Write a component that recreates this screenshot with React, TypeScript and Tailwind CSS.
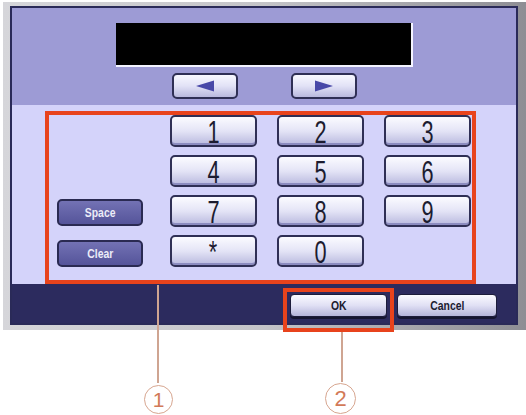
import React from 'react';

const keys = ['1', '2', '3', '4', '5', '6', '7', '8', '9', '*', '0'];

const font = { fontFamily: '"Liberation Sans", Arial, sans-serif' };

const Key: React.FC<{ label: string }> = ({ label }) => (
  <button className="flex items-center justify-center h-[32px] w-[87px] rounded-[5px] border-2 border-[#2f2f55] bg-gradient-to-b from-[#fbfbff] via-[#e4e4f6] to-[#b9b9de] shadow-[inset_0_-2px_0_#8c8cc0]">
    <span className="inline-block scale-x-70 text-[31px] leading-none text-[#1c1c30] pt-[3px]">{label}</span>
  </button>
);

const ArrowButton: React.FC<{ dir: 'left' | 'right' }> = ({ dir }) => (
  <button className="flex items-center justify-center h-[26px] w-[66px] rounded-[5px] border-2 border-[#2f2f55] bg-gradient-to-b from-[#f8f8ff] via-[#e2e2f6] to-[#b9b9de]">
    <svg width="20" height="12" viewBox="0 0 20 12">
      {dir === 'left' ? (
        <polygon points="1,6 19,0.5 19,11.5" fill="#4848a8" />
      ) : (
        <polygon points="19,6 1,0.5 1,11.5" fill="#4848a8" />
      )}
    </svg>
  </button>
);

const SideButton: React.FC<{ label: string }> = ({ label }) => (
  <button className="flex items-center justify-center h-[27px] w-[86px] rounded-[5px] border-2 border-[#2a2a52] bg-gradient-to-b from-[#7372b4] to-[#55549a]">
    <span className="inline-block scale-x-80 text-[13px] font-bold text-[#ececf8]">{label}</span>
  </button>
);

const BarButton: React.FC<{ label: string; width: string }> = ({ label, width }) => (
  <button
    className={`flex items-center justify-center h-[23px] ${width} rounded-[4px] border border-[#1c1c3a] bg-gradient-to-b from-[#fafaff] via-[#e0e0f4] to-[#b4b4da] shadow-[0_2px_0_#151530]`}
  >
    <span className="inline-block scale-x-80 text-[13px] font-bold text-[#1c1c30]">{label}</span>
  </button>
);

const App: React.FC = () => {
  return (
    <div className="relative w-[526px] h-[415px] bg-white overflow-hidden" style={font}>
      {/* device frame */}
      <div className="ml-[3px] mt-[2px] w-[523px] pt-[4px] pl-[7px] pr-[8px] pb-[5px] bg-gradient-to-r from-[#d6d6da] via-[#c4c4c8] to-[#8e8e94]">
        <div className="w-[508px] border-2 border-[#2a2a58] bg-[#2c2b5e]">
          {/* display area */}
          <div className="h-[97px] bg-[#9d9bd5] flex flex-col items-center pt-[15px]">
            <div className="w-[297px] h-[44px] bg-black border-r-2 border-b-2 border-[#f4f4ff]" />
            <div className="flex gap-[53px] mt-[6px]">
              <ArrowButton dir="left" />
              <ArrowButton dir="right" />
            </div>
          </div>

          {/* keypad area */}
          <div className="h-[179px] bg-[#d4d3fa] pt-[6px] pl-[33px]">
            <div className="w-[431px] h-[173px] border-4 border-[#e8431c] flex pl-[8px]">
              <div className="w-[86px] flex flex-col justify-end gap-[14px] pb-[1px] h-[153px]">
                <SideButton label="Space" />
                <SideButton label="Clear" />
              </div>
              <div className="ml-[27px] -mr-[4px] grid grid-cols-[87px_87px_87px] gap-x-[20px] gap-y-[8px] content-start">
                {keys.map((k) => (
                  <Key key={k} label={k} />
                ))}
              </div>
            </div>
          </div>

          {/* bottom bar */}
          <div className="h-[39px] flex justify-end items-start gap-[10px] pt-[10px] pr-[19px]">
            <BarButton label="OK" width="w-[97px]" />
            <BarButton label="Cancel" width="w-[100px]" />
          </div>
        </div>
      </div>

      {/* annotations */}
      <div className="absolute left-[283px] top-[288px] w-[111px] h-[44px] border-4 border-[#e8431c]" />
      <div className="absolute left-[157px] top-[285px] w-[2px] h-[98px] bg-[#cfa592]" />
      <div className="absolute left-[341px] top-[332px] w-[2px] h-[50px] bg-[#cfa592]" />
      <div className="absolute left-[144px] top-[385px] w-[29px] h-[29px] rounded-full border-[1.5px] border-[#d7a690] flex items-center justify-center">
        <span className="text-[21px] leading-none text-[#d27a58]">1</span>
      </div>
      <div className="absolute left-[325px] top-[383px] w-[31px] h-[31px] rounded-full border-[1.5px] border-[#d7a690] flex items-center justify-center">
        <span className="text-[22px] leading-none text-[#d27a58]">2</span>
      </div>
    </div>
  );
};

export default App;
